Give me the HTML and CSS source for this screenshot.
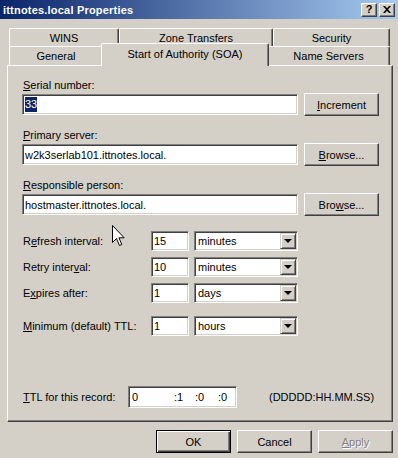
FILE: index.html
```html
<!DOCTYPE html>
<html lang="en">

<head>
    <meta charset="UTF-8">
    <title>ittnotes.local Properties</title>
    <link rel="stylesheet" href="styles.css">
</head>

<body>
    <div class="window">
        <div class="titlebar">
            <span class="title">ittnotes.local Properties</span>
            <div class="caption-buttons">
                <span class="cap-btn help">?</span>
                <span class="cap-btn">
                    <svg width="8" height="7" viewBox="0 0 8 7">
                        <path d="M0 0h2l2 2.3 2-2.3h2L5 3.5 8 7H6L4 4.7 2 7H0l3-3.5z" fill="#000"/>
                    </svg>
                </span>
            </div>
        </div>

        <div class="dialog">
            <div class="tabs">
                <div class="tab-row back">
                    <div class="tab tab-wins">WINS</div>
                    <div class="tab tab-zone">Zone Transfers</div>
                    <div class="tab tab-security">Security</div>
                </div>
                <div class="tab-row front">
                    <div class="tab tab-general">General</div>
                    <div class="tab tab-soa selected">Start of Authority (SOA)</div>
                    <div class="tab tab-ns">Name Servers</div>
                </div>
            </div>

            <div class="panel">
                <div class="field">
                    <div class="field-label"><u>S</u>erial number:</div>
                    <div class="field-row">
                        <div class="textbox"><span class="highlight">33</span></div>
                        <button class="btn"><u>I</u>ncrement</button>
                    </div>
                </div>
                <div class="field">
                    <div class="field-label"><u>P</u>rimary server:</div>
                    <div class="field-row">
                        <div class="textbox">w2k3serlab101.ittnotes.local.</div>
                        <button class="btn"><u>B</u>rowse...</button>
                    </div>
                </div>
                <div class="field">
                    <div class="field-label"><u>R</u>esponsible person:</div>
                    <div class="field-row">
                        <div class="textbox">hostmaster.ittnotes.local.</div>
                        <button class="btn">Bro<u>w</u>se...</button>
                    </div>
                </div>

                <div class="intervals">
                    <div class="interval">
                        <span class="interval-label">R<u>e</u>fresh interval:</span>
                        <div class="numbox">15</div>
                        <div class="combo"><span>minutes</span><span class="combo-arrow"></span></div>
                    </div>
                    <div class="interval">
                        <span class="interval-label">Retry inter<u>v</u>al:</span>
                        <div class="numbox">10</div>
                        <div class="combo"><span>minutes</span><span class="combo-arrow"></span></div>
                    </div>
                    <div class="interval">
                        <span class="interval-label">E<u>x</u>pires after:</span>
                        <div class="numbox">1</div>
                        <div class="combo"><span>days</span><span class="combo-arrow"></span></div>
                    </div>
                    <div class="interval spaced">
                        <span class="interval-label"><u>M</u>inimum (default) TTL:</span>
                        <div class="numbox">1</div>
                        <div class="combo"><span>hours</span><span class="combo-arrow"></span></div>
                    </div>
                </div>

                <div class="ttl-row">
                    <span class="ttl-label"><u>T</u>TL for this record:</span>
                    <div class="ttl-box">
                        <span class="ttl-days">0</span>
                        <span class="ttl-hours">:1</span>
                        <span class="ttl-mins">:0</span>
                        <span>:0</span>
                    </div>
                    <span class="ttl-format">(DDDDD:HH.MM.SS)</span>
                </div>
            </div>

            <div class="dialog-buttons">
                <button class="btn default">OK</button>
                <button class="btn">Cancel</button>
                <button class="btn disabled"><u>A</u>pply</button>
            </div>
        </div>

        <!-- mouse pointer over the dialog -->
        <svg class="cursor" width="13" height="21" viewBox="0 0 13 21">
            <path d="M0.5 0.5V17.5L4.5 13.5L7.5 20.5L9.8 19.5L6.9 12.8H12.2Z" fill="#fff" stroke="#000" stroke-width="1"/>
        </svg>
    </div>
</body>

</html>
```

FILE: styles.css
```css
:root {
    --face: #d4d0c8;
    --shadow: #808080;
    --dark: #404040;
    --highlight: #0a246a;
}

* {
    box-sizing: border-box;
}

body {
    margin: 0;
    background-color: var(--face);
    font-family: "Liberation Sans", Arial, sans-serif;
    font-size: 11px;
    color: #000;
}

.window {
    position: relative;
    width: 398px;
    height: 458px;
    overflow: hidden;
    background-color: var(--face);
}

/* title bar */
.titlebar {
    height: 19px;
    display: flex;
    justify-content: space-between;
    align-items: center;
    padding: 0 3px;
    background: linear-gradient(to right, #0a246a, #a6caf0);
}

.title {
    color: white;
    font-weight: bold;
    letter-spacing: 0.2px;
}

.caption-buttons {
    display: flex;
    gap: 2px;
}

.cap-btn {
    width: 16px;
    height: 14px;
    display: flex;
    align-items: center;
    justify-content: center;
    background-color: var(--face);
    border: 1px solid;
    border-color: #fff var(--dark) var(--dark) #fff;
    box-shadow: inset -1px -1px var(--shadow);
}

.cap-btn.help {
    font-weight: bold;
    font-size: 11px;
    line-height: 1;
}

/* tabs */
.dialog {
    padding: 9px 0 0 7px;
}

.tabs {
    position: relative;
    z-index: 1;
    padding-left: 2px;
}

.tab-row {
    display: flex;
}

.tab-row.back {
    height: 18px;
}

.tab-row.front {
    height: 19px;
}

.tab {
    height: 100%;
    display: flex;
    align-items: center;
    justify-content: center;
    background-color: var(--face);
    border-top: 1px solid #fff;
    border-left: 1px solid #fff;
    border-right: 1px solid var(--dark);
    border-radius: 2px 2px 0 0;
    box-shadow: inset -1px 0 var(--shadow);
}

.tab-wins { width: 110px; }
.tab-zone { width: 154px; }
.tab-security { width: 117px; }
.tab-general { width: 94px; }
.tab-soa { width: 168px; }
.tab-ns { width: 123px; }

.tab.selected {
    position: relative;
    z-index: 2;
    height: 23px;
    margin: -3px -2px 0;
    padding-bottom: 3px;
}

/* property page */
.panel {
    width: 386px;
    height: 357px;
    padding: 12px 0 0 14px;
    border: 1px solid;
    border-color: #fff var(--dark) var(--dark) #fff;
    box-shadow: inset -1px -1px var(--shadow);
}

.field + .field {
    margin-top: 12px;
}

.field-label {
    line-height: 14px;
    padding-left: 1px;
    margin-bottom: 1px;
}

.field-row {
    display: flex;
    align-items: center;
    gap: 6px;
    height: 23px;
}

.textbox,
.numbox,
.combo,
.ttl-box {
    display: flex;
    align-items: center;
    background-color: white;
    border: 1px solid;
    border-color: var(--shadow) #fff #fff var(--shadow);
    box-shadow: inset 1px 1px var(--dark), inset -1px -1px var(--face);
    white-space: nowrap;
}

.textbox {
    width: 276px;
    height: 21px;
    padding: 0 2px;
}

.highlight {
    background-color: var(--highlight);
    color: white;
    line-height: 15px;
}

.btn {
    width: 75px;
    height: 23px;
    padding: 0;
    font: inherit;
    color: #000;
    background-color: var(--face);
    border: 1px solid;
    border-color: #fff var(--dark) var(--dark) #fff;
    box-shadow: inset -1px -1px var(--shadow);
}

.btn.default {
    border-color: #000;
    box-shadow: inset 1px 1px #fff, inset -1px -1px var(--dark), inset -2px -2px var(--shadow);
}

.btn.disabled {
    color: var(--shadow);
    text-shadow: 1px 1px #fff;
}

/* interval rows */
.intervals {
    margin-top: 15px;
}

.interval {
    display: flex;
    align-items: center;
    height: 20px;
}

.interval + .interval {
    margin-top: 6px;
}

.interval.spaced {
    margin-top: 13px;
}

.interval-label {
    width: 129px;
    padding-left: 1px;
}

.numbox {
    width: 38px;
    height: 20px;
    padding: 0 2px;
}

.combo {
    width: 104px;
    height: 20px;
    margin-left: 5px;
    padding: 2px 2px 2px 3px;
    justify-content: space-between;
}

.combo-arrow {
    position: relative;
    width: 16px;
    height: 16px;
    margin-right: -1px;
    background-color: var(--face);
    border: 1px solid;
    border-color: var(--face) var(--dark) var(--dark) var(--face);
    box-shadow: inset 1px 1px #fff, inset -1px -1px var(--shadow);
}

.combo-arrow::after {
    content: "";
    position: absolute;
    left: 3px;
    top: 5px;
    border-left: 4px solid transparent;
    border-right: 4px solid transparent;
    border-top: 4px solid #000;
}

/* ttl row */
.ttl-row {
    display: flex;
    align-items: center;
    height: 22px;
    margin-top: 50px;
}

.ttl-label {
    width: 106px;
    padding-left: 1px;
}

.ttl-box {
    width: 109px;
    height: 22px;
    padding: 0 3px;
}

.ttl-days { width: 42px; }
.ttl-hours { width: 21px; }
.ttl-mins { width: 23px; }

.ttl-format {
    margin-left: 32px;
}

/* OK / Cancel / Apply */
.dialog-buttons {
    width: 386px;
    display: flex;
    justify-content: flex-end;
    gap: 6px;
    margin-top: 8px;
}

.cursor {
    position: absolute;
    left: 112px;
    top: 225px;
}
```
